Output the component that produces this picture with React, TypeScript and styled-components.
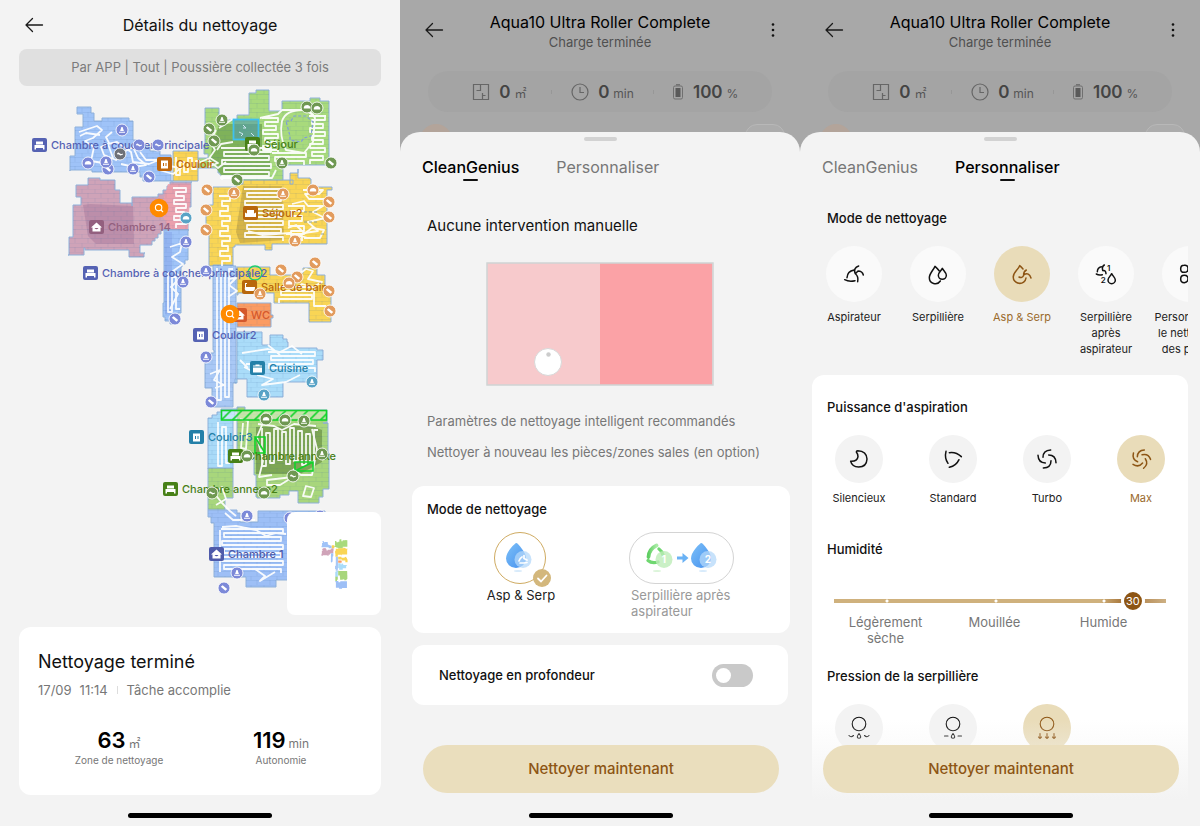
import React, { useState } from "react";
import styled, { createGlobalStyle, css } from "styled-components";

const GlobalStyle = createGlobalStyle`
  *, *::before, *::after { box-sizing: border-box; }
  body { margin: 0; background: #f3f3f3; color: #111; font-family: Inter, "Noto Sans CJK SC", "Liberation Sans", sans-serif; }
  button { font: inherit; color: inherit; background: none; border: 0; padding: 0; cursor: pointer; }
  h1, h2, h3, p, dl, dd, dt, ul { margin: 0; padding: 0; border: 0; }
  svg { display: block; }
`;

const gold = "#eadebd";
const brown = "#8d5514";

/* ---------- shared layout ---------- */

const Screens = styled.main`
  display: grid;
  grid-template-columns: repeat(3, minmax(0, 1fr));
  min-height: 100vh;
`;

const Phone = styled.section`
  position: relative;
  display: flex;
  flex-direction: column;
  min-width: 0;
  overflow: hidden;
  background: #f3f3f3;
`;

const HomeIndicator = styled.div`
  width: 144px;
  height: 5px;
  margin: auto auto 8px;
  border-radius: 3px;
  background: #000;
`;

const IconButton = styled.button`
  display: grid;
  place-items: center;
  justify-self: end;
  width: 24px;
  height: 24px;
`;

const Card = styled.div`
  background: #fff;
  border-radius: 12px;
`;

const SectionTitle = styled.h3`
  font-size: 13px;
  line-height: 20px;
  font-weight: 500;
  color: #111;
`;

const BackArrow = () => (
  <svg width="20" height="16" viewBox="0 0 20 16" fill="none" stroke="#1a1a1a" strokeWidth="1.300" strokeLinecap="round" strokeLinejoin="round">
    <path d="M18.500 8H2M8.500 1.500 2 8l6.500 6.500" />
  </svg>
);

/* ---------- cleaning details ---------- */

const DetailsHeader = styled.header`
  display: grid;
  grid-template-columns: 24px 1fr 24px;
  align-items: center;
  height: 49px;
  padding: 0 22px;
`;

const DetailsTitle = styled.h1`
  font-size: 16px;
  line-height: 24px;
  font-weight: 400;
  text-align: center;
`;

const Summary = styled.p`
  margin: 0 19px;
  border-radius: 8px;
  background: #e0e0e0;
  color: #7b7b7b;
  font-size: 13px;
  line-height: 37px;
  text-align: center;
`;

const MapArea = styled.div`
  position: relative;
  height: 541px;
`;

const MiniMap = styled.div`
  position: absolute;
  right: 19px;
  bottom: 12px;
  display: grid;
  place-items: center;
  width: 94px;
  height: 103px;
  border-radius: 8px;
  background: #fff;
`;

const ResultCard = styled(Card)`
  height: 168px;
  margin: 0 19px;
  padding: 22px 19px 0;
`;

const ResultTitle = styled.h2`
  font-size: 18px;
  line-height: 26px;
  font-weight: 400;
`;

const ResultMeta = styled.p`
  display: flex;
  align-items: center;
  gap: 8px;
  margin-top: 6px;
  font-size: 13px;
  line-height: 18px;
  color: #777;
`;

const Divider = styled.i`
  width: 1px;
  height: 8px;
  margin: 0 1px;
  background: #ddd;
`;

const Metrics = styled.dl`
  display: grid;
  grid-template-columns: 1fr 1fr;
  margin-top: 28px;
  text-align: center;
`;

const Metric = styled.div`
  display: flex;
  flex-direction: column-reverse;
`;

const MetricValue = styled.dd`
  font-size: 22px;
  line-height: 26px;
  font-weight: 600;
  color: #000;
  small { margin-left: 3px; font-size: 12px; line-height: 12px; font-weight: 400; color: #777; }
`;

const MetricLabel = styled.dt`
  font-size: 10px;
  line-height: 14px;
  color: #777;
`;

type Room = { fill: string; points: string };

/* walls follow the scan grid, so every slanted edge becomes a staircase */
const stepped = (points: string) => {
  const list = points.split(" ").map((p) => p.split(",").map(Number));
  const out: number[][] = [];
  list.forEach(([x, y], i) => {
    const [nx, ny] = list[(i + 1) % list.length];
    const dx = nx - x;
    const dy = ny - y;
    const n = Math.max(1, Math.floor(Math.min(Math.abs(dx), Math.abs(dy)) / 3));
    for (let k = 0; k < n; k++) {
      const y0 = Math.round(y + (dy * k) / n);
      out.push([Math.round(x + (dx * k) / n), y0], [Math.round(x + (dx * (k + 1)) / n), y0]);
    }
  });
  return out.map((p) => p.join(",")).join(" ");
};

const rooms: Room[] = [
  { fill: "#9fc3f8", points: "77,107 91,107 91,113 94,121 102,121 102,118 116,118 129,121 133,140 140,147 160,155 171,157 171,181 146,181 140,172 92,170 70,171 70,156 75,153 75,127 83,123 83,114 77,114" },
  { fill: "#a8da7c", points: "198,158 208,154 204,145 205,108 219,108 219,120 237,115 249,113 249,110 249,93 256,93 256,90 269,90 269,111 281,110 282,101 310,101 310,98 320,98 320,101 329,101 329,165 283,167 283,184 240,184 237,175 220,173 218,168 198,168" },
  { fill: "#fad352", points: "173,151 198,151 198,181 171,181" },
  { fill: "#cfa3b8", points: "88,178 100,180 113,180 115,190 120,203 132,206 132,197 153,197 163,190 170,182 192,182 191,207 188,230 164,230 152,245 140,245 140,253 145,253 144,257 130,257 129,250 85,248 84,255 68,255 69,237 73,236 73,205 81,204 81,197 76,197 76,185 88,185" },
  { fill: "#9fc3f8", points: "164,230 189,230 188,260 182,267 181,313 175,324 165,317 163,303" },
  { fill: "#f9d555", points: "213,187 228,187 243,180 283,180 293,184 290,173 298,169 298,178 310,179 311,187 332,190 327,208 327,244 272,244 272,250 266,250 265,245 235,247 233,266 210,266 209,233 206,205 213,204" },
  { fill: "#a9c8f5", points: "213,265 233,266 236,290 236,383 233,407 217,407 212,388 205,387 205,360 214,350 213,300" },
  { fill: "#f9d555", points: "237,267 265,267 270,275 297,277 303,268 312,265 317,275 325,278 325,288 331,297 331,322 310,322 309,303 275,303 274,293 238,295" },
  { fill: "#fb9b62", points: "237,303 270,303 271,315 273,318 271,327 237,327" },
  { fill: "#aadcf9", points: "237,332 262,333 262,345 270,346 270,335 279,335 287,342 288,348 317,350 323,351 323,360 317,362 317,382 283,383 283,397 247,395 247,379 235,383" },
  { fill: "#a9daf8", points: "208,418 221,409 237,411 235,420 233,469 208,469" },
  { fill: "#a8d67c", points: "208,468 233,468 233,498 225,500 225,510 208,510" },
  { fill: "#a8d67c", points: "237,407 245,410 327,413 327,423 323,423 328,453 329,489 323,489 323,497 319,503 299,503 298,491 280,498 257,497 256,475 254,455 237,455" },
  { fill: "#9dbff6", points: "208,510 237,513 240,522 258,522 258,511 325,511 325,580 276,580 276,587 246,587 246,577 214,577 214,523" },
].map((r) => ({ ...r, points: stepped(r.points) }));

const shades = [
  { fill: "#78aa55", points: "219,124 262,124 262,150 270,152 270,176 222,176 210,160 212,148" },
  { fill: "#b98ba7", points: "83,205 90,204 133,206 134,244 96,244 88,236" },
  { fill: "#efa0aa", points: "168,184 191,184 188,229 170,229 160,212" },
  { fill: "#cfae46", points: "243,186 282,186 284,240 240,243 236,232" },
  { fill: "#759d4e", points: "256,427 310,425 322,430 322,462 300,474 256,474" },
  { fill: "#8fb0ee", points: "164,232 172,232 172,315 165,314" },
];

/* back-and-forth cleaning runs inside a rectangle */
const sweepRows = (x: number, y: number, w: number, h: number, step: number) => {
  let d = `M${x} ${y}`;
  for (let i = 0; i * step <= h; i++) {
    const inset = (i * 7) % 4;
    const right = x + w - inset;
    d += i % 2 ? `H${x + inset}v${step}` : `H${right}v${step}`;
  }
  return d;
};
const sweepColumns = (x: number, y: number, w: number, h: number, step: number) => {
  let d = `M${x} ${y}`;
  for (let i = 0; i * step <= w; i++) {
    const inset = (i * 5) % 7;
    d += i % 2 ? `V${y + inset}h${step}` : `V${y + h - inset}h${step}`;
  }
  return d;
};

const trails = [
  sweepRows(221, 148, 50, 28, 4),
  sweepRows(262, 118, 16, 34, 4),
  sweepRows(309, 116, 16, 44, 4),
  sweepRows(272, 153, 34, 10, 4),
  sweepColumns(176, 157, 20, 18, 4),
  sweepRows(173, 188, 13, 38, 4),
  sweepRows(244, 189, 39, 48, 4),
  sweepRows(219, 196, 11, 66, 5),
  sweepRows(288, 206, 16, 30, 5),
  sweepColumns(168, 272, 8, 40, 4),
  sweepColumns(217, 268, 13, 132, 4),
  sweepRows(278, 287, 36, 12, 4),
  sweepRows(268, 352, 47, 18, 4),
  sweepColumns(218, 422, 11, 44, 4),
  sweepColumns(262, 428, 52, 38, 4),
  sweepRows(221, 529, 62, 42, 4),
  "M79 132l18-6 5 4-9 8-8 3 9 6-3 14 12 2 10-5-5-14 9-2 14 10 2 10 16 2 10-4 10 6 12 2-8 6-14-4",
  "M112 132l-6 5 3 6-8 4 3 8 12 5 8-8 9-5 5 11 8 7-12 2-13-3M80 136l6-3 14 2M140 152l6 8 12 0 8 8",
  "M216 130l-6 11 5 9-7 10 10 8 8-6M198 163l12-5 8 5-10 4M219 128l14-9M260 118l18-4 4-4h24l8 6h12",
  "M282 121q4-11 20-11 9 0 13 8l-2 24-9 11-18-3q-7-14-4-29z",
  "M217 150l4-6 12-2M220 178h52l4-8",
  "M292 204l12-3 4 5 15 0-10 6 12 6-17 4 10 9-14 2-8-8-8 3",
  "M303 190h20l-4 4h-14l4 5h16M286 234h18l8-6 12 2-4 8h-16",
  "M248 231l14 4 28-2 18 5M298 275l8-6 7 2-5 8 14 3-9 5-11-3-6 5M314 290v16h12",
  "M170 247l12-4-2 9-8 5 11 7-10 7 8 6-10 10 7 7-8 15",
  "M228 279l8-1-7 7 8 6-9 6M210 374l10-4-6 10 10 5-9 3",
  "M242 353l26-4 12 3 12-6 10 8M246 364h14l-8 7-8-4M257 375l16 4-11 6 24-3 14-7M240 360l8 8M268 345l12 10",
  "M240 419l8 2-2 28-5-1 2-25M262 425l-5 12 6 24-4 16 13-2M312 429l5 20-5 26h-11l-8-6M258 424l16 2 8 4 12-6 22 2",
  "M267 480l26-3-13 8h-13zM306 486l8 2-3 9-8-1z",
  "M216 505l10-6-4-12-8 6 8 10 8 8 6 5M225 513l8 7h22M222 527l14-1 20 4 10 6 10-3 10 1",
  "M255 569l10 7-5 5 15-9M220 530v42",
];

type Tone = "blue" | "green" | "orange" | "teal" | "gray";
type Kind = "cone" | "pill" | "box" | "snake";
const tones: Record<Tone, string> = { blue: "#7c89d8", green: "#6f9852", orange: "#e29b5d", teal: "#59a3c6", gray: "#6e7178" };
const glyphs: Record<Kind, React.ReactNode> = {
  cone: <path d="M-.6-3h1.200l1.300 4H-1.900zM-3 1.800H3v1H-3z" />,
  pill: <path d="M-3.200-1.200l1.800-1.500 4.600 3.700-1.800 1.800zM-2 .5l1 1" />,
  box: <path d="M-3.200.2q.6-2.200 2.200-2 2.800-1 4.200 1.600v1.700h-6.400z" />,
  snake: <path d="M-3-.4q1.200-2 2.600-.4 1.200 1.300 3.400.2v1.200q-2.500 1.500-3.600.2-1-1.200-1.600 0z" />,
};

const badges: [number, number, Tone, Kind][] = [
  [122, 130, "blue", "cone"], [139, 145, "blue", "snake"], [158, 145, "blue", "snake"], [108, 169, "blue", "pill"],
  [88, 163, "blue", "box"], [106, 162, "blue", "cone"], [133, 169, "blue", "cone"], [149, 177, "blue", "pill"],
  [120, 154, "gray", "snake"], [307, 107, "green", "box"], [317, 108, "green", "box"], [222, 120, "green", "cone"],
  [209, 129, "green", "pill"], [214, 141, "green", "pill"], [254, 150, "green", "box"], [282, 163, "green", "cone"],
  [331, 163, "green", "pill"], [237, 180, "green", "pill"], [207, 190, "orange", "pill"], [234, 193, "orange", "cone"],
  [283, 194, "orange", "cone"], [313, 190, "orange", "box"], [329, 202, "orange", "pill"], [206, 210, "orange", "pill"],
  [329, 217, "orange", "pill"], [206, 230, "orange", "pill"], [295, 241, "orange", "cone"], [186, 218, "teal", "box"],
  [186, 242, "blue", "cone"], [206, 271, "blue", "cone"], [183, 282, "blue", "cone"], [175, 319, "blue", "pill"],
  [281, 270, "orange", "pill"], [297, 277, "orange", "pill"], [289, 283, "orange", "box"], [260, 294, "orange", "cone"],
  [315, 263, "orange", "pill"], [329, 291, "orange", "pill"], [330, 311, "orange", "pill"], [206, 357, "blue", "cone"],
  [211, 402, "blue", "pill"], [312, 382, "teal", "cone"], [264, 395, "teal", "cone"], [266, 419, "green", "box"],
  [285, 420, "green", "box"], [304, 421, "green", "cone"], [322, 454, "green", "cone"], [247, 456, "green", "box"],
  [293, 476, "green", "snake"], [212, 493, "green", "snake"], [264, 493, "green", "box"], [247, 516, "blue", "cone"],
  [290, 518, "blue", "cone"], [320, 516, "blue", "cone"], [237, 573, "blue", "cone"], [224, 588, "blue", "pill"],
];

type Furniture = "bed" | "door" | "sofa" | "house" | "bath" | "pot";
const furniture: Record<Furniture, React.ReactNode> = {
  bed: <path d="M4 3.500h7v3H4zM2.500 7h10v4.500H11V10H4v1.500H2.500z" />,
  door: <path d="M4 3.500h7v8H4zM6 6v3h1V6zM8.500 6v3h1V6z" fillRule="evenodd" />,
  sofa: <path d="M4 4h7v3.500l2-1V11H2V6.500l2 1z" />,
  house: <path d="M7.500 2.500 13 7.500h-1.500v4h-8v-4H2zM5.500 8q2 2.500 4 0z" fillRule="evenodd" />,
  bath: <path d="M3 3h2v1H4v3h9q0 4-2 4H5Q2 11 3 7z" />,
  pot: <path d="M5.500 3.500h4v1H12v1H3v-1h2.500zM3 6.500h9v5H3z" />,
};

const roomLabels: [string, number, number, string, Furniture][] = [
  ["Chambre à coucher principale", 32, 138, "#5562b3", "bed"],
  ["Couloir", 157, 157, "#c0660a", "door"],
  ["Séjour", 245, 137, "#478017", "bed"],
  ["Séjour2", 243, 206, "#b8670c", "sofa"],
  ["Chambre 14", 89, 220, "#93607f", "house"],
  ["Chambre à coucher principale2", 83, 266, "#5562b3", "bed"],
  ["Salle de bain", 242, 280, "#b8670c", "bath"],
  ["WC", 232, 308, "#d4582c", "house"],
  ["Couloir2", 193, 328, "#5562b3", "door"],
  ["Cuisine", 250, 361, "#2480a8", "pot"],
  ["Couloir3", 189, 430, "#2480a8", "door"],
  ["Chambre annexe", 228, 449, "#478017", "bed"],
  ["Chambre annexe2", 163, 482, "#478017", "bed"],
  ["Chambre 1", 209, 547, "#4e5aaa", "house"],
];

const MapDrawing = styled.svg`
  width: 100%;
  height: 100%;
  text { font-size: 11px; font-weight: 500; }
`;

const Rooms = ({ outline }: { outline?: string }) => (
  <>
    {rooms.map((r, i) => (
      <polygon key={i} points={r.points} fill={r.fill} stroke={outline} strokeWidth={outline ? 1 : 0} />
    ))}
  </>
);

const Search = ({ x, y }: { x: number; y: number }) => (
  <g transform={`translate(${x} ${y})`} fill="none" stroke="#fff" strokeWidth="1.100">
    <circle r="9.300" fill="#ff8a00" stroke="none" />
    <circle cx="-.4" cy="-.4" r="3.200" />
    <path d="m2 2 2 2" />
  </g>
);

const CleaningMap = () => (
  <MapDrawing viewBox="0 86 400 541" role="img" aria-label="Carte de nettoyage">
    <defs>
      <pattern id="tiles" width="13" height="9" patternUnits="userSpaceOnUse">
        <path d="M0 0H13M4 0V4M10 4V9M0 4.500H13" stroke="#32629b" strokeOpacity=".13" strokeWidth=".8" />
      </pattern>
      <pattern id="hatch" width="11" height="10" patternUnits="userSpaceOnUse" x="221" y="410.500">
        <path d="M0 10 10 0" stroke="#12d22a" strokeWidth="1.600" />
      </pattern>
    </defs>
    <Rooms outline="#8fb1da" />
    {shades.map((s, i) => <polygon key={i} points={s.points} fill={s.fill} opacity=".85" />)}
    {rooms.map((r, i) => <polygon key={i} points={r.points} fill="url(#tiles)" />)}
    <g fill="none" stroke="#fff" strokeWidth="1.800" strokeLinejoin="round" opacity=".92">
      {trails.map((d, i) => <path key={i} d={d} />)}
    </g>
    <g fill="none" stroke="#7f9cd8" strokeWidth="1.200" strokeDasharray="3 2">
      <path d="M286 121h5l3-5h12l7 6-2 14-7 2-3 4-11-2v-4z" />
      <path d="M304 212h14M304 222h14M321 234h3" stroke="#8c9f95" />
    </g>
    <rect x="233.500" y="119.500" width="25" height="20" fill="#4f9db0" fillOpacity=".6" stroke="#3fc0ee" strokeWidth="1.800" />
    <path d="m243 125 3 3h-3M239 132l4 2-2 2M251 133l3 3" stroke="#cfe6f4" fill="none" />
    <rect x="221.500" y="410.500" width="105" height="9.500" fill="#fff" fillOpacity=".35" />
    <g fill="none" stroke="#12d22a" strokeWidth="1.600">
      <rect x="221.500" y="410.500" width="105" height="9.500" fill="url(#hatch)" />
      <path d="M255 437h10v16h-10zl10 16M295 462h18v9h-18zM295 471l18-9" />
    </g>
    <circle cx="255" cy="273" r="7" fill="none" stroke="#1fce6c" strokeWidth="1.300" />
    {roomLabels.map(([name, x, y, color, icon]) => (
      <g key={name} fill={color}>
        <rect x={x} y={y} width="15" height="14" rx="2" />
        <g transform={`translate(${x} ${y})`} fill="#fff">{furniture[icon]}</g>
        <text x={x + 19} y={y + 11}>{name}</text>
      </g>
    ))}
    {badges.map(([x, y, tone, kind], i) => (
      <g key={i} transform={`translate(${x} ${y})`} fill="#fff">
        <circle r="6" fill={tones[tone]} stroke="#fff" strokeOpacity=".85" />
        {glyphs[kind]}
      </g>
    ))}
    <Search x={159} y={208} />
    <Search x={230} y={314} />
  </MapDrawing>
);

const DetailsScreen = () => (
  <Phone>
    <DetailsHeader>
      <IconButton aria-label="Retour"><BackArrow /></IconButton>
      <DetailsTitle>Détails du nettoyage</DetailsTitle>
    </DetailsHeader>
    <Summary>Par APP | Tout | Poussière collectée 3 fois</Summary>
    <MapArea>
      <CleaningMap />
      <MiniMap>
        <svg width="27" height="50" viewBox="66 88 268 502" role="img" aria-label="Aperçu de la carte"><Rooms /></svg>
      </MiniMap>
    </MapArea>
    <ResultCard>
      <ResultTitle>Nettoyage terminé</ResultTitle>
      <ResultMeta><span>17/09</span><span>11:14</span><Divider /><span>Tâche accomplie</span></ResultMeta>
      <Metrics>
        <Metric><MetricLabel>Zone de nettoyage</MetricLabel><MetricValue>63<small>㎡</small></MetricValue></Metric>
        <Metric><MetricLabel>Autonomie</MetricLabel><MetricValue>119<small>min</small></MetricValue></Metric>
      </Metrics>
    </ResultCard>
    <HomeIndicator />
  </Phone>
);

/* ---------- robot screen behind the sheets ---------- */

const Backdrop = styled.div`
  height: 156px;
  padding-top: 10px;
  overflow: hidden;
  background: #a8a8a8;
`;

const RobotHeader = styled.header`
  display: grid;
  grid-template-columns: 31px 1fr 31px;
  align-items: center;
  padding: 0 15px;
  text-align: center;
`;

const RobotName = styled.h2`
  font-size: 16px;
  line-height: 24px;
  font-weight: 400;
  color: #000;
`;

const RobotState = styled.p`
  font-size: 13px;
  line-height: 16px;
  color: #505050;
`;

const Stats = styled.ul`
  display: grid;
  grid-template-columns: 1fr 1fr 1fr;
  align-items: center;
  height: 41px;
  margin: 21px 28px 0;
  padding: 0 16px 0 20px;
  border-radius: 20px;
  background: #a4a4a4;
  list-style: none;
`;

const Stat = styled.li`
  display: flex;
  align-items: center;
  justify-content: center;
  gap: 9px;
  font-size: 17px;
  line-height: 20px;
  font-weight: 600;
  color: #444;
  & + & { border-left: 1px solid; border-image: linear-gradient(transparent 40%, #979797 40% 60%, transparent 60%) 1; }
  small { margin-left: 4px; font-size: 12px; line-height: 12px; font-weight: 400; color: #555; }
`;

const Peek = styled.div`
  display: flex;
  justify-content: space-between;
  margin: 12px 15px 0 20px;
`;

const PeekAvatar = styled.span`
  width: 32px;
  height: 32px;
  border-radius: 16px;
  background: #b3a49a;
`;

const PeekPill = styled.span`
  width: 40px;
  height: 32px;
  border: 1px solid #b8b8b8;
  border-radius: 12px;
  background: #acacac;
`;

const Sheet = styled.div`
  position: relative;
  flex: 1;
  margin-top: -24px;
  padding: 5px 0 0;
  border-radius: 20px 20px 0 0;
  background: #f3f3f3;
`;

const Handle = styled.div`
  width: 33px;
  height: 4px;
  margin: 0 auto;
  border-radius: 2px;
  background: #d2d2d2;
`;

const Tabs = styled.div`
  display: flex;
  gap: 37px;
  padding: 14px 22px 0;
`;

const Tab = styled.button<{ $active: boolean }>`
  display: flex;
  flex-direction: column;
  align-items: center;
  font-size: 16px;
  line-height: 24px;
  color: #777;
  &::after { content: ""; width: 15px; height: 2px; border-radius: 1px; }
  ${(p) => p.$active && css`
    color: #000;
    font-weight: 500;
    &::after { background: #111; }
  `}
`;

const Footer = styled.div<{ $fade?: boolean }>`
  position: absolute;
  inset: auto 0 0;
  display: flex;
  flex-direction: column;
  gap: 20px;
  padding: 25px 21px 0 23px;
  background: ${(p) => (p.$fade ? "linear-gradient(#f3f3f300, #f3f3f3 80px)" : "none")};
`;

const StartButton = styled.button`
  height: 48px;
  border-radius: 24px;
  background: ${gold};
  color: ${brown};
  font-size: 15px;
  line-height: 48px;
  font-weight: 500;
`;

const DockedIndicator = styled(HomeIndicator)`
  margin-top: 0;
`;

const StatIcon = ({ children }: { children: React.ReactNode }) => (
  <svg width="18" height="18" viewBox="0 0 18 18" fill="none" stroke="#666" strokeWidth="1.200">{children}</svg>
);

const RobotBackdrop = () => (
  <Backdrop>
    <RobotHeader>
      <IconButton aria-label="Retour"><BackArrow /></IconButton>
      <div>
        <RobotName>Aqua10 Ultra Roller Complete</RobotName>
        <RobotState>Charge terminée</RobotState>
      </div>
      <IconButton aria-label="Menu">
        <svg width="4" height="16" viewBox="0 0 4 16" fill="#111"><circle cx="2" cy="2.500" r="1.300" /><circle cx="2" cy="8" r="1.300" /><circle cx="2" cy="13.500" r="1.300" /></svg>
      </IconButton>
    </RobotHeader>
    <Stats>
      <Stat>
        <StatIcon><path d="M1.500 1.500h15v15h-15zM8.500 1.500v6h-4M10.500 16.500v-4h3M10.500 10v2.500" /></StatIcon>
        <span>0<small>㎡</small></span>
      </Stat>
      <Stat>
        <StatIcon><circle cx="9" cy="9" r="8" /><path d="M9 4v5.500h4" /></StatIcon>
        <span>0<small>min</small></span>
      </Stat>
      <Stat>
        <svg width="12" height="16" viewBox="0 0 12 16" fill="none" stroke="#707070"><path d="M4 .8h4" strokeWidth="1.500" /><rect x="1.500" y="2" width="9" height="13" rx="1.500" /><path d="M3.500 4h5v9h-5z" fill="#5a5a5a" stroke="none" /></svg>
        <span>100<small>%</small></span>
      </Stat>
    </Stats>
    <Peek><PeekAvatar /><PeekPill /></Peek>
  </Backdrop>
);

const SheetTabs = ({ active }: { active: string }) => (
  <Tabs role="tablist">
    {["CleanGenius", "Personnaliser"].map((t) => (
      <Tab key={t} role="tab" aria-selected={t === active} $active={t === active}>{t}</Tab>
    ))}
  </Tabs>
);

/* ---------- CleanGenius ---------- */

const GeniusTitle = styled.h3`
  margin: 35px 27px 0;
  font-size: 15px;
  line-height: 20px;
  font-weight: 400;
`;

const Illustration = styled.svg`
  width: 228px;
  height: 124px;
  margin: 26px auto 0;
`;

const Notes = styled.div`
  display: grid;
  gap: 11px;
  margin: 25px 27px 0;
  font-size: 13px;
  line-height: 20px;
  color: #777;
`;

const ModeCard = styled(Card)`
  height: 147px;
  margin: 24px 10px 0 12px;
  padding: 13px 15px 0;
`;

const ModeChoices = styled.div`
  display: grid;
  grid-template-columns: 186px 1fr;
  margin-top: 13px;
`;

const ModeChoice = styled.button<{ $active?: boolean }>`
  display: flex;
  flex-direction: column;
  align-items: center;
  justify-self: ${(p) => (p.$active ? "center" : "start")};
  gap: 3px;
  margin-left: ${(p) => (p.$active ? "0" : "16px")};
  font-size: 13px;
  line-height: 16px;
  text-align: left;
  color: ${(p) => (p.$active ? "#222" : "#999")};
`;

const ModeFrame = styled.span<{ $active?: boolean }>`
  position: relative;
  display: grid;
  place-items: center;
  width: ${(p) => (p.$active ? 52 : 105)}px;
  height: 52px;
  border: 1px solid ${(p) => (p.$active ? "#cfab62" : "#d4d4d4")};
  border-radius: 26px;
`;

const CheckBadge = styled.svg`
  position: absolute;
  right: -6px;
  bottom: -4px;
`;

const ModeLabel = styled.span`
  max-width: 105px;
  padding-left: 2px;
`;

const DeepCard = styled(Card).attrs({ as: "label" })`
  display: flex;
  align-items: center;
  justify-content: space-between;
  height: 60px;
  margin: 12px 12px 0;
  padding: 0 35px 0 27px;
  font-size: 13px;
  font-weight: 500;
`;

const Toggle = styled.input.attrs({ type: "checkbox" })`
  appearance: none;
  display: flex;
  align-items: center;
  width: 41px;
  height: 23px;
  margin: 0;
  padding: 0 4px;
  border-radius: 12px;
  background: #c9c9c9;
  &::before { content: ""; width: 15px; height: 15px; border-radius: 8px; background: #fff; }
  &:checked { justify-content: flex-end; background: #c8a35c; }
`;

const Gradients = () => (
  <defs>
    <linearGradient id="water" x1="0" x2="1" y1="0" y2="1"><stop offset="0" stopColor="#7cc0f8" /><stop offset="1" stopColor="#4690ee" /></linearGradient>
    <linearGradient id="leaf" x1="0" x2="1"><stop offset="0" stopColor="#5fce62" /><stop offset="1" stopColor="#a8eba4" /></linearGradient>
  </defs>
);

const Drop = ({ x, tag }: { x: number; tag: React.ReactNode }) => (
  <g transform={`translate(${x} 0)`}>
    <path d="M10.500 0Q12 .500 16 6q4 5 4 9.500a9.800 9.300 0 0 1-20 0Q0 11 4.500 5.500 9 0 10.500 0z" fill="url(#water)" />
    <circle cx="17" cy="16.500" r="8.500" fill="#b4d8fa" fillOpacity=".75" />
    {tag}
    <ellipse cx="12" cy="28" rx="4" ry="1" fill="#d8ebfb" />
  </g>
);

const TagNumber = styled.text`
  font-size: 10px;
  font-weight: 700;
  fill: #fff;
  text-anchor: middle;
`;

const GeniusScreen = () => {
  const [deep, setDeep] = useState(false);
  return (
    <Phone>
      <RobotBackdrop />
      <Sheet>
        <Handle />
        <SheetTabs active="CleanGenius" />
        <GeniusTitle>Aucune intervention manuelle</GeniusTitle>
        <Illustration viewBox="0 0 228 124" role="img" aria-label="Robot dans une pièce">
          <path d="M1 1h226v122H1z" fill="#f7cacc" />
          <path d="M114 1h112v122H114z" fill="#fba2a6" />
          <path d="M1 1h226v122H1z" fill="none" stroke="#d0d4d4" strokeWidth="1.500" />
          <circle cx="62" cy="100" r="13.500" fill="#fff" stroke="#d8d8d8" />
          <circle cx="62.500" cy="92.500" r="2.200" fill="#ccc" />
        </Illustration>
        <Notes>
          <p>Paramètres de nettoyage intelligent recommandés</p>
          <p>Nettoyer à nouveau les pièces/zones sales (en option)</p>
        </Notes>
        <ModeCard>
          <SectionTitle>Mode de nettoyage</SectionTitle>
          <ModeChoices>
            <ModeChoice $active>
              <ModeFrame $active>
                <svg width="27" height="30" viewBox="0 0 27 30">
                  <Gradients />
                  <Drop x={0} tag={<path d="M13 18q1-3 3-4M14 20h4M18 12.500v3l3 1.500M21 19.500l-3 .5" stroke="#fff" strokeWidth="1.700" fill="none" strokeLinecap="round" />} />
                </svg>
                <CheckBadge width="18" height="18" viewBox="0 0 18 18"><circle cx="9" cy="9" r="9" fill="#d3b77c" /><path d="m5 9.500 3 3 5.500-6" fill="none" stroke="#fff" strokeWidth="1.800" strokeLinecap="round" /></CheckBadge>
              </ModeFrame>
              <ModeLabel>Asp &amp; Serp</ModeLabel>
            </ModeChoice>
            <ModeChoice>
              <ModeFrame>
                <svg width="71" height="30" viewBox="0 0 71 30">
                  <path d="M10.500 2.500Q3 6 2.500 14" stroke="url(#leaf)" strokeWidth="3.800" fill="none" strokeLinecap="round" />
                  <path d="M2 17.500Q6 21 12 19M13 6q3 2 4 6" stroke="#6fd770" strokeWidth="3.200" fill="none" strokeLinecap="round" />
                  <circle cx="18" cy="16.500" r="8.500" fill="#bdecb8" fillOpacity=".8" />
                  <TagNumber x="18" y="20">1</TagNumber>
                  <ellipse cx="11" cy="28" rx="4" ry="1" fill="#dcf5da" />
                  <path d="M31 13.500h5.500V10l6 5-6 5V16.500H31z" fill="#6ab2f5" />
                  <Drop x={45} tag={<TagNumber x="17" y="20">2</TagNumber>} />
                </svg>
              </ModeFrame>
              <ModeLabel>Serpillière après aspirateur</ModeLabel>
            </ModeChoice>
          </ModeChoices>
        </ModeCard>
        <DeepCard>
          Nettoyage en profondeur
          <Toggle checked={deep} onChange={(e) => setDeep(e.target.checked)} />
        </DeepCard>
      </Sheet>
      <Footer>
        <StartButton>Nettoyer maintenant</StartButton>
        <DockedIndicator />
      </Footer>
    </Phone>
  );
};

/* ---------- custom cleaning ---------- */

const ModeStrip = styled.div`
  margin: 27px 12px 0;
  overflow: hidden;
  ${SectionTitle} { padding-left: 15px; }
`;

const StripRow = styled.div`
  display: flex;
  margin-top: 18px;
`;

const OptionRow = styled.div`
  display: grid;
  grid-template-columns: repeat(4, 1fr);
  margin-top: 18px;
`;

const Option = styled.button<{ $active?: boolean }>`
  display: flex;
  flex: 0 0 84px;
  flex-direction: column;
  align-items: center;
  gap: 7px;
  font-size: 11px;
  line-height: 16px;
  color: ${(p) => (p.$active ? "#9a6a2b" : "#222")};
`;

const Disc = styled.span<{ $active?: boolean; $size: number; $tone: string }>`
  display: grid;
  place-items: center;
  width: ${(p) => p.$size}px;
  height: ${(p) => p.$size}px;
  border-radius: 50%;
  background: ${(p) => (p.$active ? "#e9dcb9" : p.$tone)};
  color: ${(p) => (p.$active ? brown : "#111")};
`;

const OptionLabel = styled.span`
  white-space: pre-line;
  text-align: center;
`;

const SettingsCard = styled(Card)`
  margin: 18px 12px 0;
  padding: 22px 0 74px;
  ${SectionTitle} { padding-left: 15px; }
`;

const HumidityBlock = styled.div`
  margin-top: 32px;
`;

const SliderBox = styled.div`
  position: relative;
  height: 24px;
  margin: 30px 22px 0;
`;

const Slider = styled.input.attrs({ type: "range" })`
  appearance: none;
  display: block;
  width: 100%;
  height: 24px;
  margin: 0;
  background:
    radial-gradient(circle, #fff 1px, transparent 2px) 51px 10px / 4px 4px no-repeat,
    radial-gradient(circle, #fff 1px, transparent 2px) calc(50% - 4px) 10px / 4px 4px no-repeat,
    radial-gradient(circle, #fff 1px, transparent 2px) calc(100% - 60px) 10px / 4px 4px no-repeat,
    linear-gradient(90deg, #cfb17d 80%, #a8763a 87%, #b58a55 92%, #cdb083) 0 10px / 100% 4px no-repeat;
  &::-webkit-slider-thumb {
    appearance: none;
    width: 24px;
    height: 24px;
    border: 3px solid #fff;
    border-radius: 50%;
    background: #8d5514;
  }
`;

const SliderValue = styled.output`
  position: absolute;
  top: 0;
  width: 24px;
  margin-left: -12px;
  font-size: 11px;
  line-height: 24px;
  text-align: center;
  color: #fff;
  pointer-events: none;
`;

const SliderLabels = styled.div`
  display: grid;
  grid-template-columns: repeat(3, 109px);
  margin: 1px 0 0 19px;
  font-size: 13px;
  line-height: 16px;
  text-align: center;
  color: #777;
  white-space: pre-line;
`;

const PressureBlock = styled.div`
  margin-top: 20px;
`;

const Glyph = ({ children }: { children: React.ReactNode }) => (
  <svg width="20" height="20" viewBox="0 0 60 60" overflow="visible" fill="none" stroke="currentColor" strokeWidth="4.500" strokeLinecap="round" strokeLinejoin="round">{children}</svg>
);

const GlyphNumber = styled.text`
  font-size: 24px;
  font-weight: 600;
  fill: currentColor;
  stroke: none;
`;

const swirl = (arms: number, d: string) =>
  Array.from({ length: arms }, (_, i) => <path key={i} d={d} transform={`rotate(${(360 / arms) * i} 30 30)`} />);

const cleaningModes = [
  { label: "Aspirateur", icon: <Glyph><path d="M2 47q13 7 31 3M9 41q1-19 21-23M33 27q-5-16 11-21M34 29l8-8q13 0 16 12M35 30q9 8 6 23" /></Glyph> },
  { label: "Serpillière", icon: <Glyph><path d="M37 51a18 18 0 0 1-33-10c0-12 10-20 17-34q8 7 13 14" /><path d="M43 13c4 8 12 12 12 21a12 12 0 0 1-24 0c0-9 8-13 12-21z" /></Glyph> },
  { label: "Asp & Serp", active: true, icon: <Glyph><path d="M33 15Q28 9 23 5C18 18 4 24 4 38a19 18 0 0 0 38 4" /><path d="M43 18q-9 5-8 15M36 32q15-8 21 10M35 34q-5 10-14 5" /></Glyph> },
  { label: "Serpillière\naprès\naspirateur", icon: <Glyph><path d="M1 30q8 5 18 2M4 23q0-12 12-15M20 19q-3-11 5-16M21 20q8-2 9 9" /><path d="M47 29c4 8 11 12 11 19a11 11 0 0 1-22 0c0-7 7-11 11-19z" /><GlyphNumber x="33" y="21">1</GlyphNumber><GlyphNumber x="14" y="57">2</GlyphNumber></Glyph> },
  { label: "Personnaliser\nle nettoyage\ndes pièces", icon: <Glyph><path d="M12 4q12-2 12 10T13 25Q2 26 2 15T12 4zM13 34q11 0 11 10T13 56Q2 56 2 45t11-11zM36 14a10 10 0 1 0 20 0 10 10 0 1 0-20 0M36 45a10 10 0 1 0 20 0 10 10 0 1 0-20 0" /></Glyph> },
];

const powerModes = [
  { label: "Silencieux", icon: <Glyph><path d="M26 5q27 1 28 25-1 24-25 24Q9 53 5 37q20 1 22-14 0-8-5-14 0-4 4-4z" /></Glyph> },
  { label: "Standard", icon: <Glyph><path d="M9 7q-5 20 6 36M19 11q20-3 36 12M48 32q-8 18-29 23" /></Glyph> },
  { label: "Turbo", icon: <Glyph>{swirl(4, "M41 3Q18 4 18 25")}</Glyph> },
  { label: "Max", active: true, icon: <Glyph>{swirl(5, "M40 3Q20 4 19 23")}</Glyph> },
];

const PressureGlyph = ({ children }: { children: React.ReactNode }) => (
  <svg width="24" height="24" viewBox="0 0 24 24" fill="none" stroke="currentColor" strokeWidth="1.100" strokeLinecap="round" strokeLinejoin="round">
    <circle cx="12" cy="8" r="6.800" />
    {children}
  </svg>
);

const pressures = [
  { name: "Légère", icon: <PressureGlyph><path d="M2 19.500q2 2.500 4.500 0M17.500 19.500q2.500 2.500 4.500 0M12 17.500q3.500 4.500 0 4.800-3.500-.3 0-4.800z" /></PressureGlyph> },
  { name: "Normale", icon: <PressureGlyph><path d="M3.500 20h3.500M17 20h3.500M12 17.500q3.500 4.500 0 4.800-3.500-.3 0-4.800z" /></PressureGlyph> },
  { name: "Forte", active: true, icon: <PressureGlyph><path d="M5 17.500v5l-1.500-1.500M5 22.500 6.500 21M12 17.500v5L10.500 21M12 22.500l1.500-1.500M19 17.500v5L17.500 21M19 22.500l1.500-1.500" /></PressureGlyph> },
];

const CustomScreen = () => {
  const [humidity, setHumidity] = useState(30);
  const min = 3;
  const max = 32;
  const ratio = (humidity - min) / (max - min);
  return (
    <Phone>
      <RobotBackdrop />
      <Sheet>
        <Handle />
        <SheetTabs active="Personnaliser" />
        <ModeStrip>
          <SectionTitle>Mode de nettoyage</SectionTitle>
          <StripRow>
            {cleaningModes.map((m) => (
              <Option key={m.label} $active={m.active}>
                <Disc $size={56} $tone="#fafafa" $active={m.active}>{m.icon}</Disc>
                <OptionLabel>{m.label}</OptionLabel>
              </Option>
            ))}
          </StripRow>
        </ModeStrip>
        <SettingsCard>
          <SectionTitle>Puissance d'aspiration</SectionTitle>
          <OptionRow>
            {powerModes.map((m) => (
              <Option key={m.label} $active={m.active}>
                <Disc $size={48} $tone="#f3f3f3" $active={m.active}>{m.icon}</Disc>
                <OptionLabel>{m.label}</OptionLabel>
              </Option>
            ))}
          </OptionRow>
          <HumidityBlock>
            <SectionTitle as="label" htmlFor="humidity">Humidité</SectionTitle>
            <SliderBox>
              <Slider id="humidity" min={min} max={max} value={humidity} onChange={(e) => setHumidity(Number(e.target.value))} />
              <SliderValue htmlFor="humidity" style={{ left: `calc(12px + (100% - 24px) * ${ratio})` }}>{humidity}</SliderValue>
            </SliderBox>
            <SliderLabels><span>{"Légèrement\nsèche"}</span><span>Mouillée</span><span>Humide</span></SliderLabels>
          </HumidityBlock>
          <PressureBlock>
            <SectionTitle>Pression de la serpillière</SectionTitle>
            <OptionRow>
              {pressures.map((p) => (
                <Option key={p.name} aria-label={p.name} $active={p.active}>
                  <Disc $size={48} $tone="#f3f3f3" $active={p.active}>{p.icon}</Disc>
                </Option>
              ))}
            </OptionRow>
          </PressureBlock>
        </SettingsCard>
      </Sheet>
      <Footer $fade>
        <StartButton>Nettoyer maintenant</StartButton>
        <DockedIndicator />
      </Footer>
    </Phone>
  );
};

export default function App() {
  return (
    <>
      <GlobalStyle />
      <Screens>
        <DetailsScreen />
        <GeniusScreen />
        <CustomScreen />
      </Screens>
    </>
  );
}
